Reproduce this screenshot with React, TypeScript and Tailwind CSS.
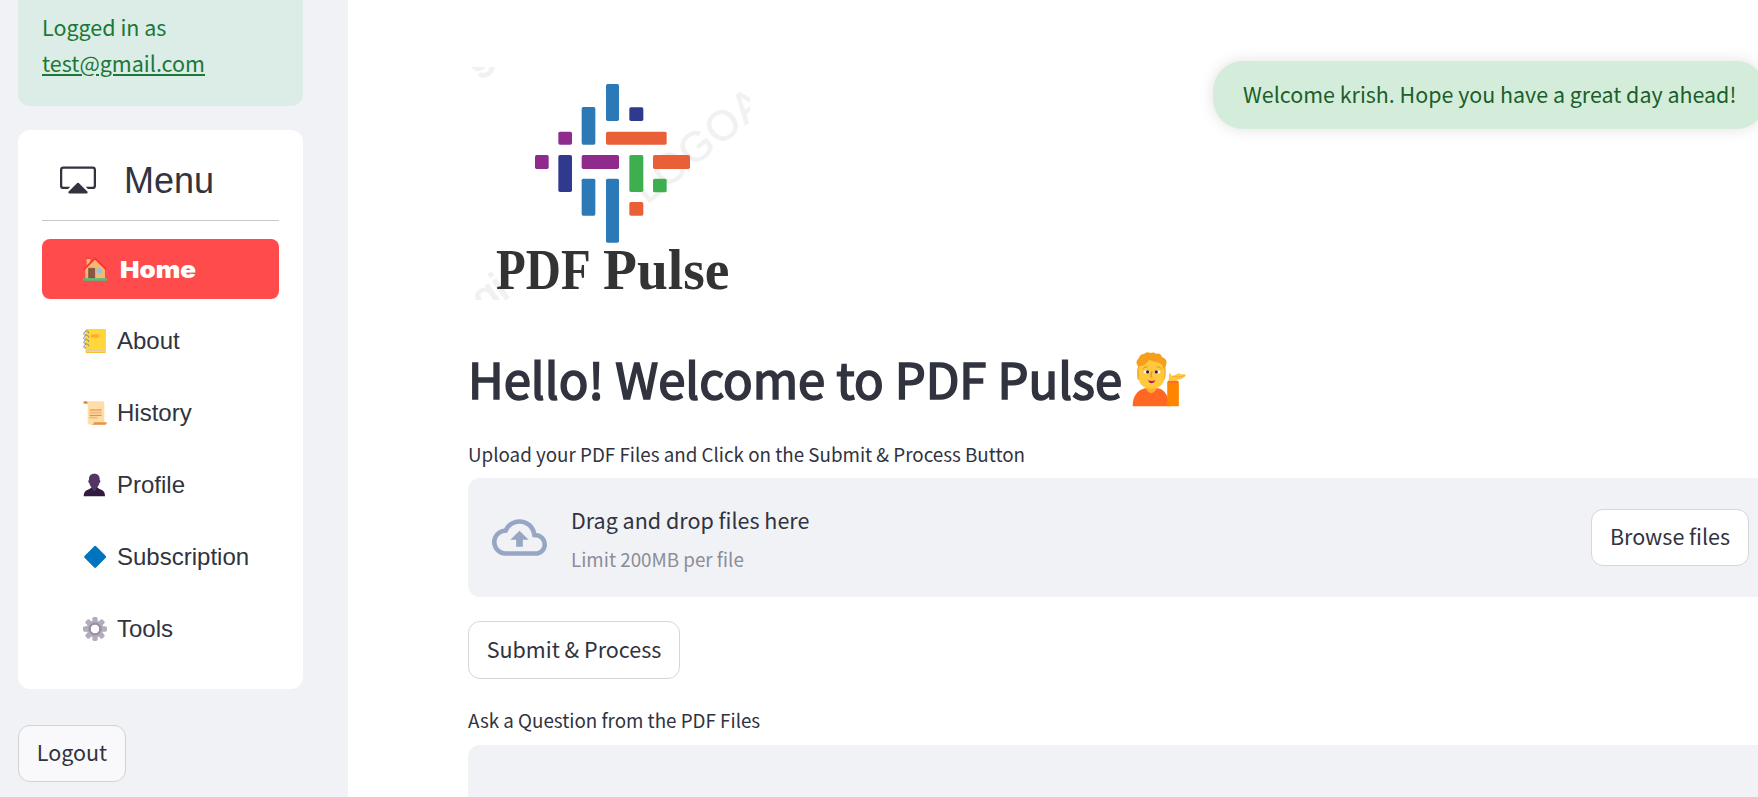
import type { ReactNode } from "react";
import { BsCast } from "react-icons/bs";

const sans = "font-['Noto_Sans_CJK_SC',sans-serif]";

function HomeIcon() {
  return (
    <svg viewBox="0 0 72 72" className="size-6">
      <path d="M11 4h11v22H11z" fill="#f3b876" />
      <path d="M9 1h14v5H9z" fill="#e9453a" />
      <path d="M36 6 7 34v31h59V34z" fill="#f5b873" />
      <path d="M2 38 36 4l34 34" fill="none" stroke="#f9352f" strokeWidth="6" strokeLinejoin="round" />
      <path d="M17 34h18v29H17z" fill="#8a5545" stroke="#6f473b" strokeWidth="2" />
      <path d="M41 35h15v13H41z" fill="#82c6fb" />
      <rect y="64" width="72" height="7" rx="3" fill="#44c47c" />
    </svg>
  );
}

function NotebookIcon() {
  return (
    <svg viewBox="0 0 72 72" className="size-6">
      <rect x="8" y="1" width="60" height="71" rx="3" fill="#fdb92c" />
      <path d="M8 64h58v5H8z" fill="#d3d3d9" />
      <rect x="8" y="1" width="60" height="62" rx="2" fill="#ffd63c" />
      <rect x="23" y="16" width="27" height="10" rx="5" fill="#ffae2b" />
      {[5, 18, 31, 44].map((y) => (
        <path key={y} d={`M17 ${y + 8}q1-8-7-7-7 1-8 10 2 4 8 0`} fill="none" stroke="#8e8e98" strokeWidth="3" />
      ))}
    </svg>
  );
}

function ScrollIcon() {
  return (
    <svg viewBox="0 0 72 72" className="size-6">
      <path d="M5 1h53q6 0 6 7v63H24q-10 0-10-9V8z" fill="#ffdda7" />
      <path d="M4 1h6q4 1 4 7H5q-5-1-4-5 1-2 3-2z" fill="#d8853d" />
      <path d="M34 64h37q1 7-6 7H26q6-1 8-7z" fill="#e5944a" />
      <path d="M20 27h36M20 43h36" stroke="#d98540" strokeWidth="3" />
      <path d="M20 35h36M20 50h23" stroke="#efb77a" strokeWidth="5" />
    </svg>
  );
}

function ProfileIcon() {
  return (
    <svg viewBox="0 0 72 72" className="size-6">
      <path d="M2 70q0-13 9-18 12-4 16-10h15q4 6 16 10 8 5 8 18z" fill="#321b41" />
      <path d="M34 2c12 0 17 8 16 19 3 1 3 8-1 9-1 8-5 12-9 14v5l-6 6-6-6v-5c-4-2-8-6-9-14-4-1-4-8-1-9C17 10 22 2 34 2z" fill="#533566" />
    </svg>
  );
}

function DiamondIcon() {
  return (
    <svg viewBox="0 0 72 72" className="size-6">
      <rect x="12" y="11" width="49" height="49" rx="4" transform="rotate(45 36.5 35.5)" fill="#0074bd" />
    </svg>
  );
}

function GearIcon() {
  return (
    <svg viewBox="0 0 72 72" className="size-6">
      {[0, 45, 90, 135].map((a) => (
        <rect key={a} x="28" y="0" width="16" height="72" rx="5" transform={`rotate(${a} 36 36)`} fill="#b4acbc" />
      ))}
      <circle cx="36" cy="36" r="25" fill="#b4acbc" />
      <circle cx="36" cy="36" r="16" fill="#fff" stroke="#998da3" strokeWidth="7" />
      <circle cx="36" cy="36" r="12" fill="#fff" />
    </svg>
  );
}

function TippingHandIcon() {
  return (
    <svg viewBox="0 0 162 164" className="mt-[3px] h-[54.5px] w-[54.5px]">
      <path d="M1 163q0-44 37-54h40q30 8 34 54z" fill="#ff6723" />
      <path d="M42 96h30v17q-15 22-30 0z" fill="#ffb02e" />
      <path d="M18 40q-6 20-2 43h82q5-23 0-43z" fill="#f3a324" />
      <path d="M19 56q0-36 39-36t39 36v20q-4 34-39 34T19 78z" fill="#ffc83d" />
      <path d="M16 42q-9-14 4-24 2-11 15-12 8-9 19-3 9-4 18 2 13-2 17 10 15 5 14 19-2 12-8 18-3-16-15-20-19-4-29-8-13 14-20 17-9 1-15 1z" fill="#f59f1c" />
      <ellipse cx="43" cy="60" rx="9" ry="5" fill="#fff" />
      <ellipse cx="75" cy="60" rx="9" ry="5" fill="#fff" />
      <circle cx="46" cy="60" r="5" fill="#37213c" />
      <circle cx="72" cy="60" r="5" fill="#37213c" />
      <path d="M31 51q7-8 15-6M73 45q9-2 15 6" fill="none" stroke="#e0872a" strokeWidth="2.500" />
      <path d="M59 60q-6 15 0 15" fill="none" stroke="#ef8f24" strokeWidth="4" strokeLinecap="round" />
      <path d="M47 85q11 4 22 0-3 9-11 9t-11-9z" fill="#bb1d52" />
      <path d="M105 92q0-5 4-5h27q4 0 4 5v71h-35z" fill="#ff8500" />
      <path d="M107 92q5-16 4-29 5-1 8 9 14-3 18-7 4-3 7 2h12q7 2 3 7-11 10-24 10l-3 8z" fill="#ffc83d" />
      <path d="M120 73q20 5 38-2" fill="none" stroke="#f3a02b" strokeWidth="2" />
      <path d="M107 87h31v6h-31z" fill="#ff6d24" />
    </svg>
  );
}

function CloudUploadIcon() {
  return (
    <svg viewBox="0 0 24 24" fill="#97a6c3" className="size-[55px] shrink-0">
      <path d="M19.350 10.040A7.490 7.490 0 0 0 12 4C9.110 4 6.600 5.640 5.350 8.040A5.994 5.994 0 0 0 0 14c0 3.310 2.690 6 6 6h13c2.760 0 5-2.240 5-5 0-2.640-2.050-4.780-4.650-4.960zM19 18H6c-2.210 0-4-1.790-4-4 0-2.050 1.530-3.760 3.560-3.970l1.070-.110.500-.950A5.469 5.469 0 0 1 12 6c2.620 0 4.880 1.860 5.390 4.430l.300 1.500 1.530.110A2.980 2.980 0 0 1 22 15c0 1.650-1.350 3-3 3zM8 13h2.550v3h2.900v-3H16l-4-4-4 4z" />
    </svg>
  );
}

const bars: [number, number, number, number, string][] = [
  [438, 87, 39, 111, "#2b79b6"],
  [365, 156, 41, 113, "#2b79b6"],
  [365, 371, 41, 111, "#2b79b6"],
  [438, 371, 39, 192, "#2b79b6"],
  [508, 157, 42, 41, "#2f3a8f"],
  [295, 300, 41, 111, "#2f3a8f"],
  [438, 230, 182, 39, "#e95f38"],
  [579, 300, 111, 42, "#e95f38"],
  [508, 441, 42, 41, "#e95f38"],
  [295, 230, 41, 39, "#8f2b8c"],
  [225, 300, 41, 42, "#8f2b8c"],
  [365, 300, 112, 42, "#8f2b8c"],
  [508, 300, 42, 111, "#3fae4e"],
  [579, 371, 41, 41, "#3fae4e"],
];

function Logo() {
  return (
    <svg viewBox="24 36 846 699" className="h-[233px] w-[282px]">
      <g fill="#f1f1f1" className="font-['Liberation_Sans',sans-serif]" fontSize="126">
        <text transform="translate(560 450) rotate(-39)" letterSpacing="4" stroke="#f1f1f1" strokeWidth="1.5">
          LOGOA
        </text>
        <text transform="translate(72 778) rotate(-35)" stroke="#f1f1f1" strokeWidth="4">
          gi
        </text>
        <text transform="translate(44 58) rotate(-35)" stroke="#f1f1f1" strokeWidth="4">
          g
        </text>
      </g>
      {bars.map(([x, y, w, h, fill]) => (
        <rect key={`${x}-${y}`} x={x} y={y} width={w} height={h} rx="5" fill={fill} />
      ))}
      <g fill="#333" fontSize="168" className="font-['Liberation_Serif',serif] font-bold">
        <text x="108" y="702" textLength="284" lengthAdjust="spacingAndGlyphs">
          PDF
        </text>
        <text x="429" y="702" textLength="379" lengthAdjust="spacingAndGlyphs">
          Pulse
        </text>
      </g>
    </svg>
  );
}

const menu: { label: string; icon: ReactNode }[] = [
  { label: "About", icon: <NotebookIcon /> },
  { label: "History", icon: <ScrollIcon /> },
  { label: "Profile", icon: <ProfileIcon /> },
  { label: "Subscription", icon: <DiamondIcon /> },
  { label: "Tools", icon: <GearIcon /> },
];

function Sidebar() {
  return (
    <aside className="flex w-[348px] shrink-0 flex-col items-start bg-[#f0f2f6] pl-[18px]">
      <div className="h-[106px] w-[285px] rounded-b-xl bg-[#dcece6] px-6 pt-[9px] text-[21.5px] leading-9 text-[#1a7838]">
        <p>Logged in as</p>
        <a className="underline decoration-2 underline-offset-2">test@gmail.com</a>
      </div>
      <nav className="mt-6 h-[559px] w-[285px] rounded-xl bg-white px-6 font-['Liberation_Sans',sans-serif] text-2xl text-[#31333f]">
        <div className="flex h-[91px] items-center border-b border-[#c9c9cc] pt-[9px] pl-[18px]">
          <BsCast className="size-9" />
          <span className="mt-0.5 ml-7 text-4xl">Menu</span>
        </div>
        <ul className="mt-[18px] flex flex-col gap-3">
          <li className="flex h-[60px] items-center rounded-lg bg-[#ff4b4b] pl-[40.5px] text-white">
            <HomeIcon />
            <span className="mt-0.5 ml-[13px] origin-left scale-x-[1.13] font-['Inter',sans-serif] text-[23px] font-black">
              Home
            </span>
          </li>
          {menu.map(({ label, icon }) => (
            <li key={label} className="flex h-[60px] items-center pl-[40.5px]">
              {icon}
              <span className="ml-[10.5px]">{label}</span>
            </li>
          ))}
        </ul>
      </nav>
      <button className="mt-9 h-[57px] w-[108px] rounded-xl border border-[#d0d1d6] bg-[#f9f9fb] pb-0.5 text-[21.5px] text-[#31333f]">
        Logout
      </button>
    </aside>
  );
}

export default function App() {
  return (
    <div className={`${sans} flex h-[797px] w-[1758px] overflow-hidden bg-white text-[#31333f]`}>
      <Sidebar />
      <main className="relative min-w-0 flex-1 pl-[120px]">
        <div className="pt-[67px]">
          <Logo />
        </div>
        <h1 className="mt-[42px] flex h-[72px] items-center gap-[10px] text-[49px] leading-[72px] font-normal whitespace-nowrap">
          <span className="w-[654px] [-webkit-text-stroke:1.7px_#31333f]">Hello! Welcome to PDF Pulse</span>
          <TippingHandIcon />
        </h1>
        <p className="mt-6 h-10 text-[18.8px] leading-8">
          Upload your PDF Files and Click on the Submit &amp; Process Button
        </p>
        <section className="flex h-[119px] w-[1305px] items-center rounded-xl bg-[#f0f2f6] pl-6">
          <CloudUploadIcon />
          <div className="ml-6 flex-1">
            <p className="text-[21.5px] leading-10">Drag and drop files here</p>
            <p className="mt-px -mb-px text-[18.8px] leading-9 text-[#8c8d97]">Limit 200MB per file</p>
          </div>
          <button className="mr-6 h-[57px] w-[158px] rounded-xl border border-[#d6d6d9] bg-white pb-0.5 text-[21.5px]">
            Browse files
          </button>
        </section>
        <button className="mt-6 h-[58px] w-[212px] rounded-xl border border-[#d6d6d9] pb-0.5 text-[21.5px]">
          Submit &amp; Process
        </button>
        <p className="mt-[25px] h-[41px] text-[18.8px] leading-8">Ask a Question from the PDF Files</p>
        <div className="h-[70px] w-[1305px] rounded-xl bg-[#f0f2f6]" />
        <div className="absolute top-[61px] left-[865px] h-[68px] w-[553px] rounded-[30px] bg-[#d4edda] pl-[30px] text-[21.45px] leading-[66px] whitespace-nowrap text-[#1b5e2b] shadow-[0_0_15px_rgba(0,0,0,0.12)]">
          Welcome krish. Hope you have a great day ahead!
        </div>
      </main>
    </div>
  );
}
